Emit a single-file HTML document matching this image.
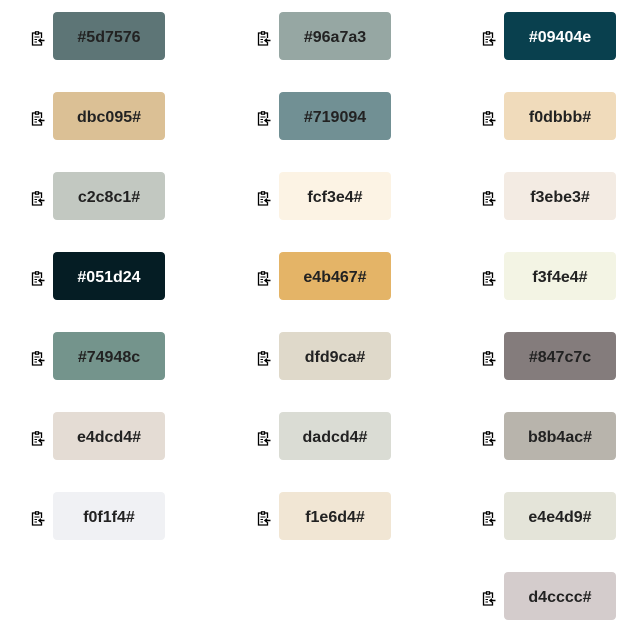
<!DOCTYPE html><html><head><meta charset="utf-8"><style>
body{margin:0;width:635px;height:633px;background:#fff;position:relative;font-family:"Liberation Sans",Arial,sans-serif}
.s{position:absolute;width:112px;height:48px;border-radius:4px;box-sizing:border-box;padding-top:4px;display:flex;align-items:center;justify-content:center;font-weight:bold;font-size:16px;color:#222}
.i{position:absolute;width:14px;height:15px}
</style></head><body>
<script>
const cols=[[53,["#5d7576","#5d7576"],["#dbc095","dbc095#"],["#c2c8c1","c2c8c1#"],["#051d24","#051d24",1],["#74948c","#74948c"],["#e4dcd4","e4dcd4#"],["#f0f1f4","f0f1f4#"]],
[279,["#96a7a3","#96a7a3"],["#719094","#719094"],["#fcf3e4","fcf3e4#"],["#e4b467","e4b467#"],["#dfd9ca","dfd9ca#"],["#dadcd4","dadcd4#"],["#f1e6d4","f1e6d4#"]],
[504,["#09404e","#09404e",1],["#f0dbbb","f0dbbb#"],["#f3ebe3","f3ebe3#"],["#f3f4e4","f3f4e4#"],["#847c7c","#847c7c"],["#b8b4ac","b8b4ac#"],["#e4e4d9","e4e4d9#"],["#d4cccc","d4cccc#"]]];
let h="";
for(const c of cols){const x=c[0];c.slice(1).forEach((r,k)=>{const y=12+80*k;
h+=`<svg class="i" style="left:${x-22}px;top:${y+19}px" viewBox="0 0 14 15"><path d="M4.5 2H1.5V14H10.5V11M10.5 7V2H7.5" fill="none" stroke="#000" stroke-width="1.3"/><rect x="4.5" y="0.8" width="3" height="2.4" fill="none" stroke="#000" stroke-width="1.2"/><path d="M3.5 6H8.5M3.5 8.5H6M3.5 11H6" stroke="#000" stroke-width="1.1"/><path d="M13.5 9.5H8.5M10 7.8L8 9.5L10 11.2" fill="none" stroke="#000" stroke-width="1.5"/></svg>`;
h+=`<div class="s" style="left:${x}px;top:${y}px;background:${r[0]};${r[2]?'color:#fff':''}">${r[1]}</div>`;});}
document.write(h);
</script>
</body></html>
